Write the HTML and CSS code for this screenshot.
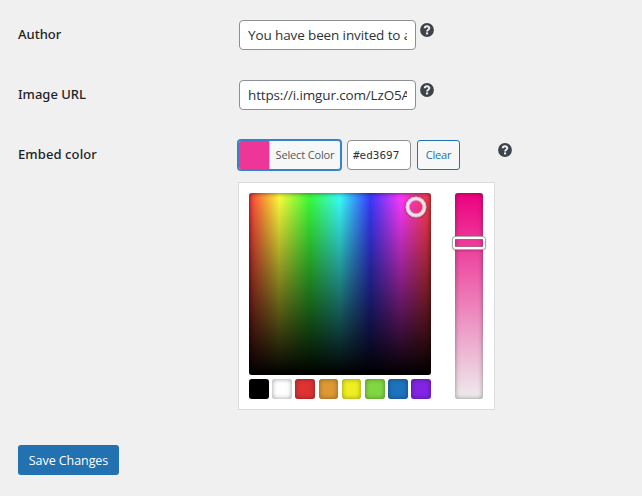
FILE: index.html
```html
<!DOCTYPE html>
<html lang="en">
<head>
<meta charset="utf-8">
<title>Settings</title>
<link rel="stylesheet" href="styles.css">
</head>
<body>
<svg width="0" height="0" class="defs"><symbol id="help" viewBox="0 0 14 14"><circle cx="7" cy="7" r="6.9" fill="#3c434a"/><path d="M4.8 5.2C4.8 2.6 9.3 2.6 9.3 5.1C9.3 6.8 7.1 6.7 7.1 8.5" fill="none" stroke="#f0f0f1" stroke-width="2"/><rect x="6" y="9.4" width="2.1" height="2" fill="#f0f0f1"/></symbol></svg>
<form class="settings">
  <div class="row">
    <label class="label" for="author">Author</label>
    <input class="field" id="author" value="You have been invited to a server">
    <svg class="help"><use href="#help"/></svg>
  </div>
  <div class="row">
    <label class="label" for="image">Image URL</label>
    <input class="field url" id="image" value="https://i.imgur.com/LzO5AbC.png">
    <svg class="help"><use href="#help"/></svg>
  </div>
  <div class="row color-row">
    <label class="label embed" for="hex">Embed color</label>
    <div class="picker-wrap">
      <div class="controls">
        <button type="button" class="select"><span class="chip"></span><span class="select-text">Select Color</span></button>
        <input class="hex" id="hex" value="#ed3697">
        <button type="button" class="clear">Clear</button>
      </div>
      <div class="picker">
        <div class="main">
          <div class="square"><span class="handle"></span></div>
          <div class="palette">
            <i class="black"></i><i class="white"></i><i class="red"></i><i class="orange"></i><i class="yellow"></i><i class="green"></i><i class="blue"></i><i class="purple"></i>
          </div>
        </div>
        <div class="strip"><span class="slider"></span></div>
      </div>
    </div>
    <svg class="help far"><use href="#help"/></svg>
  </div>
  <button type="button" class="save">Save Changes</button>
</form>
</body>
</html>
```
FILE: styles.css
```css
* { box-sizing: border-box; }
body { margin: 0; background: #f0f0f0; color: #1d2327; font-family: "Open Sans", "Noto Sans", sans-serif; font-size: 13px; }
button, input { font-family: inherit; margin: 0; }
.defs { position: absolute; }
.settings { padding: 20px 18px 0; display: flex; flex-direction: column; align-items: flex-start; }
.row { display: flex; align-items: flex-start; height: 60px; }
.color-row { height: 304px; }
.label { width: 221px; margin-top: 4px; font-family: "Noto Sans", sans-serif; font-weight: 500; line-height: 20px; }
.embed { letter-spacing: .1px; }
.field { width: 177px; height: 30px; padding: 0 8px; border: 1px solid #8c8f94; border-radius: 4px; background: #fff; color: #2c3338; font-size: 13.5px; letter-spacing: -.12px; outline: 0; }
.url { letter-spacing: -.15px; }
.help { width: 14px; height: 14px; margin: 3px 0 0 4px; }
.picker-wrap { width: 257px; margin-left: -1px; }
.controls { display: flex; gap: 6px; }
.select { display: flex; width: 103px; height: 30px; padding: 0; border: 1px solid #3582c4; border-radius: 3px; background: #f6f7f7; box-shadow: 0 0 0 1px #3582c4; color: #50575e; font-size: 11px; overflow: hidden; }
.chip { width: 31px; height: 28px; background: #ed3697; border-right: 1px solid #c3c4c7; }
.select-text { flex: 1; line-height: 28px; text-align: center; letter-spacing: -.15px; white-space: nowrap; }
.hex { width: 64px; height: 30px; padding: 0 5px; border: 1px solid #8c8f94; border-radius: 4px; background: #fff; color: #2c3338; font: 11px "DejaVu Sans Mono", monospace; outline: 0; }
.clear { width: 43px; height: 30px; padding: 0 0 1px; border: 1px solid #2271b1; border-radius: 3px; background: #f6f7f7; color: #2271b1; font-size: 11px; letter-spacing: -.15px; }
.picker { display: flex; gap: 24px; width: 257px; height: 228px; margin-top: 12px; padding: 10px; background: #fff; border: 1px solid #dcdcde; }
.main { width: 182px; }
.square { position: relative; width: 182px; height: 182px; border-radius: 3px; background: linear-gradient(to bottom, transparent, #000), linear-gradient(to right, #ff3a3a, #ffff3a, #3aff3a, #3affff, #3a3aff, #ff3aff, #ff3a3a); }
.square::after { content: ""; position: absolute; inset: 0; border-radius: 3px; box-shadow: inset 0 0 5px rgba(0,0,0,.65); }
.handle { position: absolute; z-index: 1; left: 157px; top: 4px; width: 20px; height: 20px; border: 3px solid #eee; border-radius: 50%; opacity: .95; box-shadow: 0 0 0 .5px #ddd, 0 0 2px 1px rgba(60,60,60,.5), inset 0 0 0 .5px #ddd; }
.palette { display: flex; justify-content: space-between; margin-top: 4px; }
.palette i { width: 19.6px; height: 20px; border-radius: 3px; box-shadow: inset 0 0 5px rgba(0,0,0,.4); }
.black { background: #000; }
.white { background: #fff; }
.red { background: #d33; }
.orange { background: #d93; }
.yellow { background: #ee2; }
.green { background: #81d742; }
.blue { background: #1e73be; }
.purple { background: #8224e3; }
.strip { position: relative; width: 28px; height: 206px; border-radius: 3px; background: linear-gradient(#ed007f, #ededed); box-shadow: inset 0 0 5px rgba(0,0,0,.4); }
.slider { position: absolute; left: -2px; right: -2px; top: 44px; height: 12px; border: 2px solid #fff; border-radius: 3px; box-shadow: 0 0 0 1px #aaa, 0 1px 2px 1px rgba(0,0,0,.2); }
.slider::after { content: ""; position: absolute; inset: 0; border: solid rgba(150,110,130,.75); border-width: 1px 0; }
.far { margin-left: 3px; }
.save { width: 101px; height: 30px; margin-top: 1px; padding: 0; border: 0; border-radius: 3px; background: #2271b1; color: #fff; font-size: 12.5px; letter-spacing: -.07px; }
```
